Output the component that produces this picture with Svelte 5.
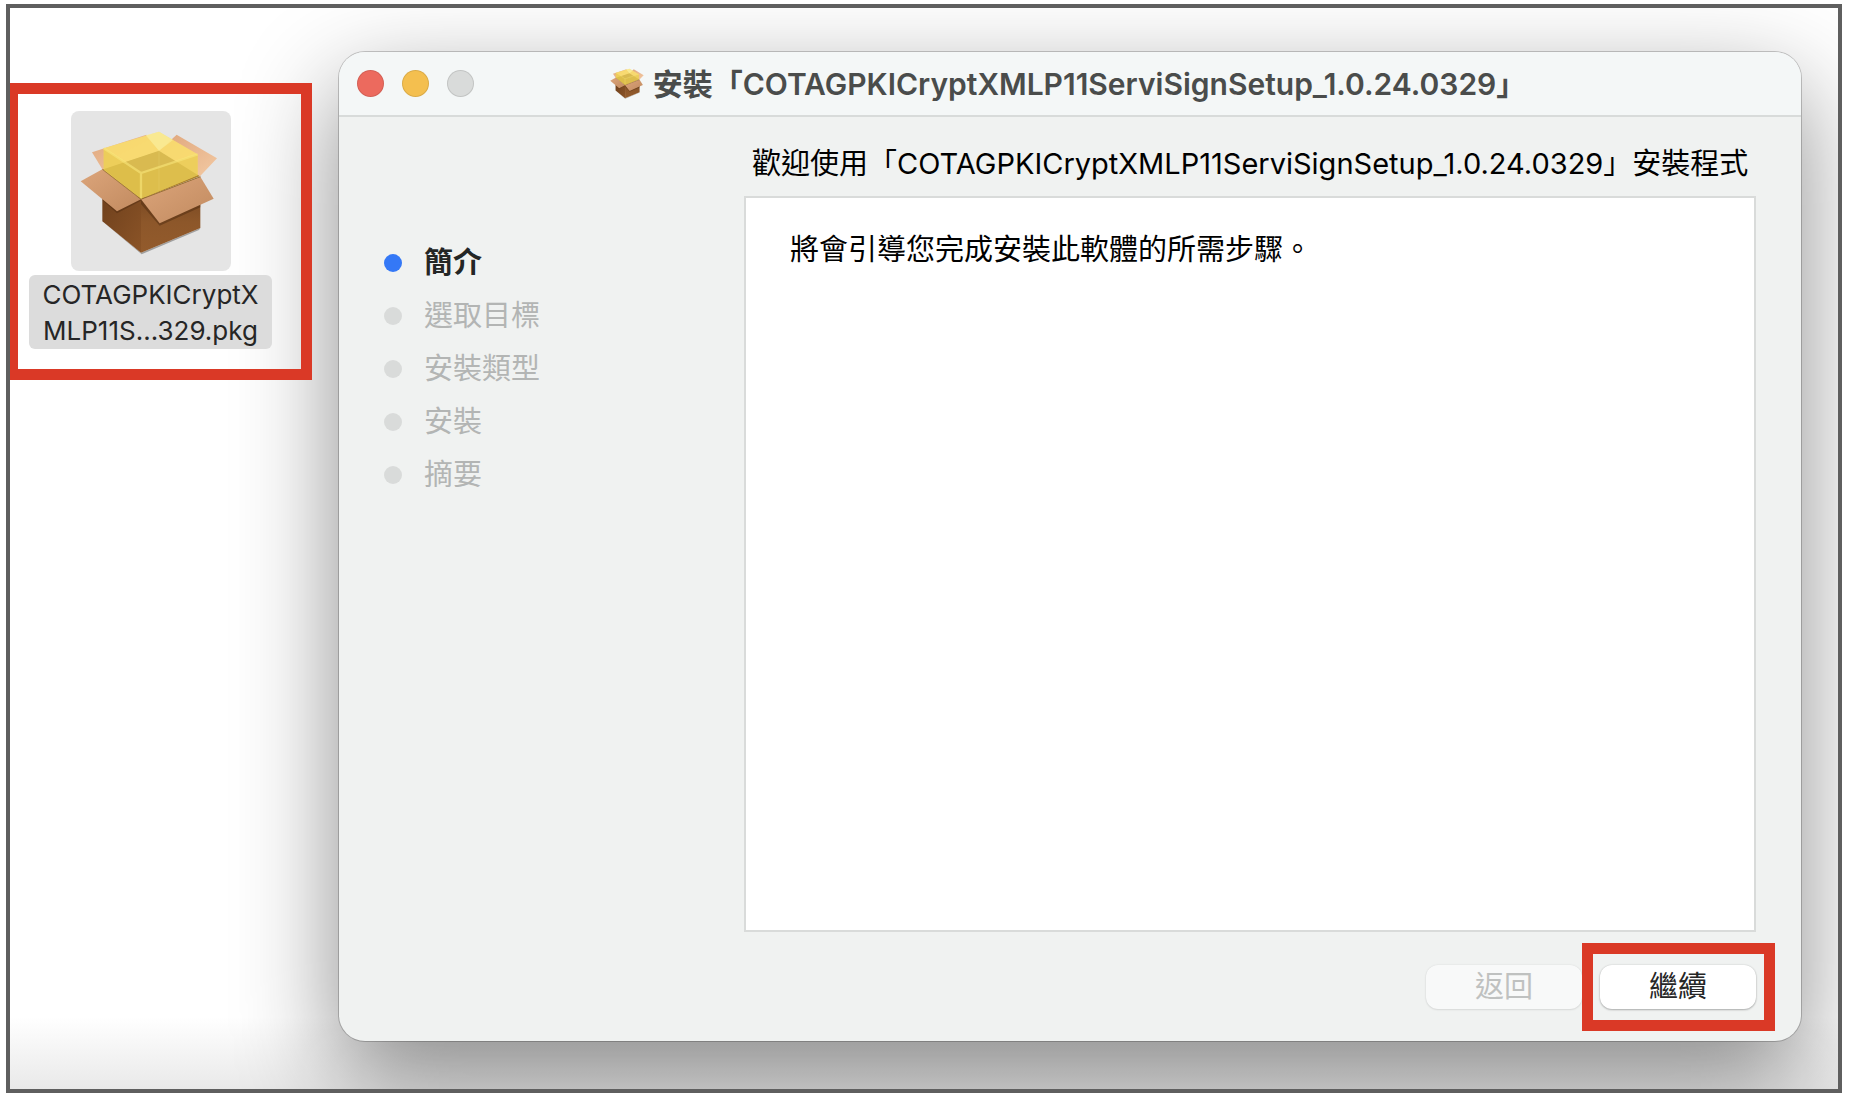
<script lang="ts">
    const packageName = 'COTAGPKICryptXMLP11ServiSignSetup_1.0.24.0329';
    const steps = ['簡介', '選取目標', '安裝類型', '安裝', '摘要'];

    let current = $state(0);
</script>

{#snippet box(id: string)}
    <defs>
        <linearGradient id="{id}-left" x1="0" y1="0" x2="1" y2="1">
            <stop offset="0" stop-color="#6d3f1c" />
            <stop offset="1" stop-color="#8b5427" />
        </linearGradient>
        <linearGradient id="{id}-right" x1="0" y1="0" x2="0" y2="1">
            <stop offset="0" stop-color="#6b3f1c" />
            <stop offset="0.6" stop-color="#8d572a" />
            <stop offset="1" stop-color="#935b2c" />
        </linearGradient>
        <linearGradient id="{id}-flap" x1="0" y1="0" x2="1" y2="1">
            <stop offset="0" stop-color="#dca57b" />
            <stop offset="1" stop-color="#c18a5f" />
        </linearGradient>
        <linearGradient id="{id}-back" x1="0" y1="0" x2="1" y2="1">
            <stop offset="0" stop-color="#dfa67c" />
            <stop offset="1" stop-color="#f3c9a3" />
        </linearGradient>
    </defs>
    <path d="M308 664 424 758 602 684 598 690 426 763Z" fill="#000" opacity="0.3" />
    <path d="M308 508 478 452 602 528 424 598Z" fill="#b08430" />
    <path d="M277 457 440 404 478 452 308 508Z" fill="url(#{id}-back)" />
    <path d="M531 404 652 475 601 529 478 452Z" fill="url(#{id}-back)" />
    <path d="M308 560 424 598V758L308 664Z" fill="url(#{id}-left)" />
    <path d="M424 598 602 530V684L424 758Z" fill="url(#{id}-right)" />
    <path d="M308 600 352 640 424 602V612L480 677 602 622V612L424 590Z" fill="#4f2c10" opacity="0.5" />
    <path d="M312 445 478 395 594 463V526L424 596 312 510Z" fill="#f9de6c" opacity="0.88" />
    <path d="M312 508 478 452 594 525 424 596Z" fill="#c2a13c" opacity="0.5" />
    <path d="M312 445 424 517V596L312 510Z" fill="#e2c144" opacity="0.5" />
    <path d="M424 517 594 463V526L424 596Z" fill="#e2c248" opacity="0.5" />
    <path d="M438 406 478 395 520 420 478 452Z" fill="#faf0a0" opacity="0.6" />
    <path d="M312 445 424 519 594 463M424 519V596" fill="none" stroke="#f8e67c" stroke-width="7" opacity="0.6" />
    <path d="M478 452V570" stroke="#edda78" stroke-width="2" opacity="0.4" />
    <path d="M308 508 424 598 352 634 243 544Z" fill="url(#{id}-flap)" />
    <path d="M424 598 602 530 642 596 480 670Z" fill="url(#{id}-flap)" />
    <path d="M308 508 424 598 602 530" fill="none" stroke="#8a6020" stroke-width="2" />
{/snippet}

<main class="desktop">
    <div class="file">
        <svg class="file-icon" viewBox="214 333 480 480" aria-hidden="true">
            {@render box('file')}
        </svg>
        <span class="file-name">COTAGPKICryptX<br />MLP11S...329.pkg</span>
        <div class="callout"></div>
    </div>

    <section class="window">
        <header class="titlebar">
            <div class="lights">
                <button class="light close" aria-label="關閉"></button>
                <button class="light minimize" aria-label="縮到最小"></button>
                <button class="light zoom" aria-label="縮放" disabled></button>
            </div>
            <h1>
                <svg viewBox="240 390 416 374" aria-hidden="true">
                    {@render box('title')}
                </svg>
                <span>安裝「{packageName}」</span>
            </h1>
        </header>

        <div class="content">
            <ol class="steps">
                {#each steps as step, i}
                    <li class:active={i === current}>{step}</li>
                {/each}
            </ol>

            <div class="main">
                <h2>歡迎使用「{packageName}」安裝程式</h2>
                <div class="pane">
                    <p>將會引導您完成安裝此軟體的所需步驟。</p>
                </div>
                <footer>
                    <button class="push" disabled={current === 0} onclick={() => current--}>返回</button>
                    <div class="next">
                        <button class="push" onclick={() => (current = Math.min(current + 1, steps.length - 1))}>繼續</button>
                        <div class="callout"></div>
                    </div>
                </footer>
            </div>
        </div>
    </section>
</main>

<style>
    :global(body) {
        margin: 0;
        background: #fff;
    }

    :global(#app) {
        display: flow-root;
    }

    * {
        box-sizing: border-box;
    }

    .desktop {
        display: flex;
        min-height: calc(100vh - 13px);
        margin: 4px 10px 9px 6px;
        padding: 44px 37px 48px 19px;
        border: 4px solid #5f5f5f;
        background: linear-gradient(to top, #e9e9e9, #fff 72px);
        font-family: Inter, "Noto Sans CJK TC", sans-serif;
        font-size: 29px;
        overflow: hidden;
    }

    .file {
        position: relative;
        z-index: 1;
        display: flex;
        flex: none;
        flex-direction: column;
        align-items: center;
        align-self: flex-start;
        gap: 4px;
        width: 243px;
        margin: 59px 67px 0 0;
    }

    .file-icon {
        width: 160px;
        height: 160px;
        border-radius: 8px;
        background: #e5e5e5;
    }

    .file-name {
        width: 100%;
        padding: 2px 0 0;
        border-radius: 6px;
        background: #dcdcdc;
        color: #262626;
        font-size: 26px;
        line-height: 36px;
        text-align: center;
        white-space: nowrap;
    }

    /* red marker frames drawn over the parts the guide points at */
    .callout {
        position: absolute;
        border: 11px solid #da3926;
        pointer-events: none;
    }

    .file .callout {
        inset: -28px -40px -31px -22px;
    }

    .window {
        display: flex;
        flex: 1;
        flex-direction: column;
        min-width: 0;
        border-radius: 26px;
        background: #f0f2f1;
        box-shadow: 0 0 0 1px rgba(0, 0, 0, 0.2), 0 36px 100px rgba(0, 0, 0, 0.46);
    }

    .titlebar {
        position: relative;
        display: flex;
        align-items: center;
        justify-content: center;
        height: 65px;
        border-bottom: 2px solid #d8dbda;
        border-radius: 26px 26px 0 0;
        background: #f4f7f7;
    }

    .lights {
        position: absolute;
        left: 18px;
        display: flex;
        gap: 18px;
    }

    .light {
        width: 27px;
        height: 27px;
        padding: 0;
        border: 1px solid rgba(0, 0, 0, 0.1);
        border-radius: 50%;
    }

    .close {
        background: #ec6a5e;
    }

    .minimize {
        background: #f4bf4f;
    }

    .zoom {
        background: #d9dbda;
    }

    h1,
    h2 {
        margin: 0;
        font-size: 29px;
        line-height: 40px;
        white-space: nowrap;
    }

    h1 {
        display: flex;
        align-items: center;
        gap: 9px;
        padding-right: 4px;
        color: #4a4c4b;
        font-size: 30px;
        font-weight: 600;
    }

    h1 svg {
        width: 34px;
        height: 31px;
    }

    .content {
        display: flex;
        flex: 1;
    }

    .steps {
        flex: none;
        width: 405px;
        margin: 0;
        padding: 119px 0 0 45px;
        line-height: 40px;
        list-style: none;
    }

    .steps li {
        display: flex;
        align-items: center;
        gap: 22px;
        height: 53px;
        color: #b3b5b4;
    }

    .steps li::before {
        width: 18px;
        height: 18px;
        border-radius: 50%;
        background: #d9dbda;
        content: "";
    }

    .steps .active {
        color: #242625;
        font-weight: 700;
    }

    .steps .active::before {
        background: #3478f6;
    }

    .main {
        display: flex;
        flex: 1;
        flex-direction: column;
        min-width: 0;
        padding: 27px 45px 32px 0;
    }

    h2 {
        margin: 0 0 12px 8px;
        color: #000;
        font-weight: 400;
    }

    .pane {
        flex: 1;
        padding: 32px 44px;
        border: 2px solid #d9dbda;
        background: #fff;
        color: #000;
    }

    .pane p {
        margin: 0;
        line-height: 40px;
    }

    footer {
        display: flex;
        justify-content: flex-end;
        gap: 18px;
        padding-top: 33px;
    }

    .push {
        display: block;
        width: 156px;
        height: 44px;
        padding: 0;
        border: 0;
        border-radius: 12px;
        background: #fff;
        box-shadow: 0 0 2px rgba(0, 0, 0, 0.15), 0 1px 2px rgba(0, 0, 0, 0.25);
        color: #262626;
        font: inherit;
        line-height: 44px;
    }

    .push:disabled {
        background: #f8f9f9;
        box-shadow: 0 0 2px rgba(0, 0, 0, 0.1), 0 1px 2px rgba(0, 0, 0, 0.08);
        color: #bfc1c0;
    }

    .next {
        position: relative;
    }

    .next .callout {
        inset: -22px -19px -22px -18px;
    }
</style>
